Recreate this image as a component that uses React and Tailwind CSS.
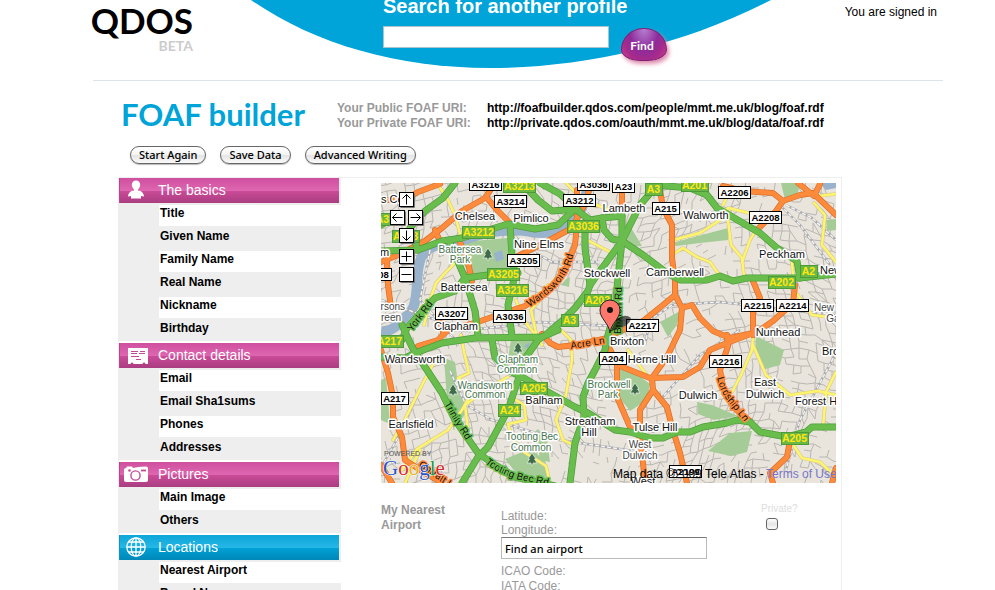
import React from "react";

/* ---------- map data: every coordinate lives in the viewBox below ---------- */

const MAP_BOX = "381 183 455 300";

function buildSideStreets() {
  let seed = 4711;
  const rand = () => {
    seed = (seed * 16807) % 2147483647;
    return seed / 2147483647;
  };
  const cols = 66;
  const rows = 46;
  const step = 8;
  const point = [];
  for (let r = 0; r < rows; r++) {
    point.push([]);
    for (let c = 0; c < cols; c++) {
      const gx = 355 + c * step;
      const gy = 155 + r * step;
      point[r].push([
        Math.round(gx + 14 * Math.sin(gy / 41 + gx / 160) + (rand() - 0.5) * 3),
        Math.round(gy + 15 * Math.sin(gx / 47 + 1) + (rand() - 0.5) * 3),
      ]);
    }
  }
  let d = "";
  for (let r = 0; r < rows - 1; r++) {
    for (let c = 0; c < cols - 1; c++) {
      const density = 0.5 + 0.22 * Math.sin(c / 5 + r / 7);
      const [x, y] = point[r][c];
      const seg = (p) => {
        d += `M${x} ${y}L${p[0]} ${p[1]}`;
      };
      if (rand() < density) seg(point[r][c + 1]);
      if (rand() < density) seg(point[r + 1][c]);
      if (rand() < 0.06) seg(point[r + 1][c + 1]);
    }
  }
  return d;
}

const SIDE_STREETS = buildSideStreets();

const PARKS = [
  "M450 243L508 238L513 262L507 270L472 277L462 262Z",
  "M444 358L455 362L459 390L468 404L463 418L448 412Z",
  "M511 340L536 339L531 352L521 366L508 358Z",
  "M617 368L634 372L650 384L647 400L630 411L620 398Z",
  "M672 243L728 228L728 240L700 243L676 246Z",
  "M756 336L784 350L780 365L762 370L755 352Z",
  "M697 402L712 405L738 416L714 420L698 414Z",
  "M708 451L730 433L752 431L747 452L731 456Z",
  "M505 459L530 449L545 460L550 483L520 478Z",
  "M660 322L682 310L676 326L668 337Z",
  "M781 183L800 183L797 197L785 200Z",
  "M826 220L836 219L836 230L827 231Z",
  "M630 226L636 236L642 246L632 247L626 240Z",
  "M381 380L386 378L390 424L381 420Z",
  "M536 430L546 432L550 462L540 460Z",
  "M480 183L495 183L490 189Z",
  "M566 279L570 277L569 287L561 285Z",
];

const YELLOW = [
  "M437 183L448 200L455 215L461 238",
  "M424 325L430 300L436 283L446 272L456 262",
  "M516 300L522 318L534 333L542 345",
  "M561 330L571 340L572 360L566 395L556 420L563 440L576 446",
  "M461 335L464 352L469 373L458 378L474 390",
  "M433 364L424 381L402 425L393 440",
  "M476 385L462 410L448 430L417 449L402 470",
  "M508 377L488 388L465 405L468 430",
  "M516 400L524 405L526 420L508 424L512 438L524 452L546 466L550 483",
  "M673 240L700 233L720 220L728 208L745 212L760 216",
  "M727 212L731 245L742 258L744 276",
  "M742 262L750 240L757 228",
  "M673 254L683 248L697 257L710 262L720 276",
  "M723 205L729 193",
  "M814 203L825 215L822 245L836 262",
  "M818 196L836 194",
  "M792 262L794 290L812 315L836 318",
  "M753 337L752 350L741 375L732 392",
  "M753 345L766 375L790 395L818 391L836 395",
  "M836 372L826 392L823 427",
  "M790 440L802 458L820 462L836 477",
  "M628 350L646 374",
  "M587 240L614 254",
  "M566 183L583 200L610 210",
  "M410 470L420 450L405 483",
  "M548 285L540 300L531 310L536 333",
];

const ORANGE = [
  "M577 190L577 225L575 245L565 271L548 291L525 306L495 316L475 323L448 330L438 340L418 346",
  "M590 183L587 200L572 228L548 241L518 256",
  "M381 262L398 255L425 241L442 228L462 211L485 198L495 183",
  "M487 198L498 211L510 223",
  "M381 200L405 200L418 192L440 184",
  "M435 230L442 246",
  "M458 238L467 258L472 281",
  "M387 262L388 285L391 308",
  "M438 311L443 332",
  "M622 183L622 220",
  "M660 190L663 208L672 225L672 258L675 281L675 295L663 305L643 321L610 336",
  "M675 295L682 308L680 330L667 357L652 378",
  "M682 308L692 305L700 318L713 331L730 338L753 333L727 343L710 350L700 367L683 377L650 378L620 366",
  "M727 335L728 346L720 370L723 387L733 407L750 421",
  "M723 186L743 191L773 193L783 201L800 195L813 193L836 215",
  "M783 201L776 211L757 230",
  "M798 183L814 196L820 184",
  "M753 281L760 298L753 311L753 335",
  "M795 285L793 303L773 321L753 335",
  "M605 340L617 363L617 397L630 427L640 437L643 463L645 483",
  "M652 378L653 390L640 410L640 437",
  "M653 390L667 407L672 427L680 453L687 483",
  "M790 440L787 457L770 473L773 483",
  "M381 350L388 373L393 397L393 417L402 437L405 460L425 473L442 483",
  "M542 334L550 343L558 347L575 345L608 338",
  "M381 465L392 483",
  "M836 468L832 483",
];

const GREEN = [
  "M381 251L418 250L442 241L462 238L485 231L508 224L535 229L558 225L575 209L590 220L602 218L622 216",
  "M522 183L538 200L552 211L577 209",
  "M540 183L560 194L580 212",
  "M455 183L443 198L425 211L410 228L418 250",
  "M465 278L488 275L518 273",
  "M510 225L512 255L515 275L508 305L512 336",
  "M450 243L465 278L475 311L478 336",
  "M465 278L455 291L435 298L425 308L407 328L402 340",
  "M660 183L653 190L640 205L622 241L600 271L590 285L588 291L575 308L562 321L548 333L538 340L522 363L518 380L508 410L488 447L478 457L462 483",
  "M585 222L585 248L590 285",
  "M602 218L604 230L612 239L622 241L643 255L667 273L680 280L707 280L720 276L733 281L747 278L800 278L836 274",
  "M622 216L622 241L618 278L615 311L608 335L605 350L595 370L588 383L583 397L584 417L575 443L570 483",
  "M655 185L690 188L707 195L717 208L760 233L777 248L797 261L800 278",
  "M381 357L405 358L418 352L442 343L475 338L542 337L558 330",
  "M402 325L412 347L425 367L442 393L455 420L478 453L492 463L515 477L555 486",
  "M492 340L495 357L508 370L522 377L548 392L575 407L588 413L615 430L630 432L650 438L663 438L677 432L690 432L703 427L727 423L737 420L750 422L760 432L787 437L806 432L812 427L836 427",
  "M381 225L390 220",
];

const RAIL = [
  "M381 300L430 318L470 330L540 322L610 326",
  "M430 250L420 300L460 345",
  "M450 371L466 405L492 420L560 440L640 452",
  "M510 232L530 250L552 262L600 262",
  "M645 345L650 320L672 305L720 302L836 315",
  "M660 400L700 355L740 330",
  "M780 205L800 225L830 265",
  "M786 205L812 218L836 240",
  "M836 353L800 420L786 470",
  "M425 378L402 430L381 468",
];

const PLACES = [
  [475, 216, "Chelsea"], [531, 218, "Pimlico"], [624, 208, "Lambeth"], [706, 215, "Walworth"],
  [539, 244, "Nine Elms"], [607, 273, "Stockwell"], [675, 272, "Camberwell"], [782, 254, "Peckham"],
  [464, 287, "Battersea"], [456, 326, "Clapham"], [627, 341, "Brixton"], [778, 332, "Nunhead"],
  [415, 359, "Wandsworth"], [652, 359, "Herne Hill"], [544, 400, "Balham"], [698, 395, "Dulwich"],
  [765, 382, "East"], [765, 394, "Dulwich"], [590, 421, "Streatham"], [589, 432, "Hill"],
  [411, 424, "Earlsfield"], [655, 427, "Tulse Hill"], [643, 481, "West"],
];

const CUT_PLACES = [
  [381, 199, "s Co"], [380, 252, "m"], [820, 270, "New"], [822, 351, "Bro"], [795, 401, "Forest Hill"],
];

const SMALL_PLACES = [
  [640, 444, "West"], [640, 455, "Dulwich"], [390, 306, "arsons"], [391, 317, "reen"],
  [824, 307, "New"], [833, 318, "Ga"],
];

const PARK_NAMES = [
  [460, 249, "Battersea"], [460, 259, "Park"], [518, 359, "Clapham"], [517, 369, "Common"],
  [485, 385, "Wandsworth"], [485, 394, "Common"], [532, 436, "Tooting Bec"], [531, 447, "Common"],
  [609, 384, "Brockwell"], [608, 394, "Park"],
];

const TREES = [[488, 254], [518, 348], [453, 390], [532, 459], [635, 389]];

const WHITE_SHIELDS = [
  [485, 184, "A3216"], [593, 184, "A3036"], [623, 186, "A23"], [510, 201, "A3214"], [579, 200, "A3212"],
  [665, 208, "A215"], [734, 192, "A2206"], [765, 217, "A2208"], [523, 260, "A3205"], [377, 274, "A308"],
  [451, 313, "A3207"], [509, 316, "A3036"], [642, 325, "A2217"], [757, 305, "A2215"], [792, 305, "A2214"],
  [612, 358, "A204"], [725, 361, "A2216"], [394, 398, "A217"], [685, 471, "A2199"],
];

const GREEN_SHIELDS = [
  [519, 186, "A3213"], [653, 189, "A3"], [694, 185, "A201"], [478, 232, "A3212"], [583, 226, "A3036"],
  [503, 274, "A3205"], [512, 290, "A3216"], [597, 300, "A203"], [569, 320, "A3"], [781, 282, "A202"],
  [808, 271, "A2"], [533, 388, "A205"], [509, 410, "A24"], [794, 438, "A205"], [389, 341, "A217"],
  [382, 219, "A3"], [405, 236, "A308"],
];

function Roads({ lines, edge, fill, wide, thin }) {
  return (
    <g fill="none" strokeLinejoin="round" strokeLinecap="round">
      {lines.map((d) => <path key={d} d={d} stroke={edge} strokeWidth={wide} />)}
      {lines.map((d) => <path key={d} d={d} stroke={fill} strokeWidth={thin} />)}
    </g>
  );
}

function Shield({ x, y, name, green }) {
  const w = name.length * 5 + 7;
  return (
    <g>
      <rect
        x={Math.round(x - w / 2) + 0.5} y={y - 5.5} width={w} height={12}
        fill={green ? "#6bb845" : "#fff"} stroke={green ? "#4d9a38" : "#000"} strokeWidth="1"
      />
      <text x={x + 0.5} y={y + 4} textAnchor="middle" fontSize={green ? 10.5 : 9.5} fontWeight="700" fill={green ? "#ffe713" : "#000"}>
        {name}
      </text>
    </g>
  );
}

function Halo({ items, size, color, anchor }) {
  return (
    <g fontSize={size} fill={color} textAnchor={anchor} stroke="#fff" strokeWidth="3" strokeLinejoin="round" paintOrder="stroke">
      {items.map(([x, y, name]) => <text key={`${x}-${y}`} x={x} y={y + 4}>{name}</text>)}
    </g>
  );
}

function RoadName({ path, id, halo, children }) {
  return (
    <>
      <path id={id} d={path} fill="none" />
      <text fontSize="10" fill="#111" stroke={halo} strokeWidth="3" strokeLinejoin="round" paintOrder="stroke">
        <textPath href={`#${id}`}>{children}</textPath>
      </text>
    </>
  );
}

const CONTROLS = [
  ["Pan up", 406.5, 199.5, "M0 5V-5M-4 -1L0 -5L4 -1"],
  ["Pan left", 397.5, 217.5, "M5 0H-5M-1 -4L-5 0L-1 4"],
  ["Pan right", 415.5, 217.5, "M-5 0H5M1 -4L5 0L1 4"],
  ["Pan down", 406.5, 235.5, "M0 -5V5M-4 1L0 5L4 1"],
  ["Zoom in", 406.5, 256.5, "M-5 0H5M0 -5V5"],
  ["Zoom out", 406.5, 274.5, "M-5 0H5"],
];

function StreetMap() {
  return (
    <svg viewBox={MAP_BOX} className="block w-full overflow-hidden" fontFamily="Liberation Sans, Arial, sans-serif" role="img" aria-label="Map of Brixton, London">
      <rect x="381" y="183" width="455" height="300" fill="#e9e5dc" />
      <path d={SIDE_STREETS} stroke="#bab7b3" strokeWidth="1" fill="none" />
      {PARKS.map((d) => <path key={d} d={d} fill="#a5cc96" />)}
      <path d="M381 331C394 333 402 320 411 311C420 300 414 276 421 258C428 244 448 242 466 239C486 232 508 228 532 232C556 236 572 226 582 208L589 183" stroke="#99b3cc" strokeWidth="10" fill="none" />
      <path d="M820 183H836V188L826 190Z M494 253L502 250L504 259L496 262Z M524 346L530 342L528 349Z" fill="#99b3cc" />
      <g fill="none">
        {RAIL.map((d) => <path key={d} d={d} stroke="#a9a9ad" strokeWidth="2.4" />)}
        {RAIL.map((d) => <path key={d} d={d} stroke="#f4f4f4" strokeWidth="1.4" strokeDasharray="4 2" />)}
      </g>
      <Roads lines={YELLOW} edge="#d6c98c" fill="#fff56d" wide={3.6} thin={2.4} />
      <Roads lines={ORANGE} edge="#d9702a" fill="#fe8a3c" wide={6} thin={4.6} />
      <Roads lines={GREEN} edge="#4e9e3a" fill="#69bd4d" wide={7} thin={5.6} />

      {TREES.map(([x, y]) => (
        <path key={x} transform={`translate(${x} ${y})`} d="M0 -6L4 0L2.500 0L5 4H1V6H-1V4H-5L-2.500 0L-4 0Z" fill="#3f6b4c" stroke="#dfeeda" strokeWidth="0.800" />
      ))}
      <RoadName id="york" path="M412 332L433 304" halo="#69bd4d">York Rd</RoadName>
      <RoadName id="wandsworth" path="M529 307Q548 296 560 282Q570 270 573 256" halo="#fe8a3c">Wandsworth Rd</RoadName>
      <RoadName id="trinity" path="M444 404L456 424L466 440" halo="#69bd4d">Trinity Rd</RoadName>
      <RoadName id="tooting" path="M485 463Q500 475 520 480L560 488" halo="#69bd4d">Tooting Bec Rd</RoadName>
      <RoadName id="acre" path="M571 349L608 343" halo="#fe8a3c">Acre Ln</RoadName>
      <RoadName id="brixton" path="M621 334L622 280" halo="#69bd4d">Brixton Rd</RoadName>
      <RoadName id="lordship" path="M717 378Q722 396 731 405L746 424" halo="#fe8a3c">Lordship Ln</RoadName>
      <RoadName id="garratt" path="M418 466L450 488" halo="#fe8a3c">Garratt Ln</RoadName>

      {GREEN_SHIELDS.map(([x, y, name]) => <Shield key={`${x}-${y}`} x={x} y={y} name={name} green />)}
      <Halo items={PARK_NAMES} size={10} color="#47744e" anchor="middle" />
      <Halo items={SMALL_PLACES} size={10} color="#444" anchor="middle" />
      <Halo items={PLACES} size={11} color="#111" anchor="middle" />
      <Halo items={CUT_PLACES} size={11} color="#111" anchor="start" />
      {WHITE_SHIELDS.map(([x, y, name]) => <Shield key={`${x}-${y}`} x={x} y={y} name={name} />)}

      <path d="M610 332L617 319Q625 313 631 318Q630 326 618 328Z" fill="#000" opacity="0.600" />
      <path d="M610 333C609 323 600 319 600 310A10 10 0 0 1 620 310C620 319 611 323 610 333Z" fill="#ff776b" stroke="#222" strokeWidth="1" />
      <circle cx="610" cy="310" r="3" fill="#111" />

      {CONTROLS.map(([name, x, y, d]) => (
        <g key={name} transform={`translate(${x} ${y})`} role="button" aria-label={name}>
          <rect x="-7" y="-7" width="14" height="14" fill="#fff" stroke="#000" strokeWidth="1" />
          <path d="M-6 8H8V-6" stroke="#777" fill="none" />
          <path d={d} stroke="#000" strokeWidth="1" fill="none" />
        </g>
      ))}

      <text x="384" y="456" fontSize="7" fill="#555">POWERED BY</text>
      <text x="383" y="475" fontSize="21" fontFamily="Liberation Serif, Times New Roman, serif" stroke="#fff" strokeWidth="1" paintOrder="stroke">
        <tspan fill="#2a56c6">G</tspan><tspan fill="#d62b2b">o</tspan><tspan fill="#e8b21c">o</tspan><tspan fill="#2a56c6">g</tspan><tspan fill="#27963c">l</tspan><tspan fill="#d62b2b">e</tspan>
      </text>
      <text x="613" y="478" fontSize="12" fill="#000">Map data ©2009 Tele Atlas - </text>
      <a href="#terms"><text x="766" y="478" fontSize="12" fill="#7777cc">Terms of Use</text></a>
    </svg>
  );
}

/* ---------- sidebar ---------- */

const PersonIcon = () => (
  <svg viewBox="0 0 24 20" className="h-5 w-6" fill="#fff" aria-hidden="true">
    <path d="M12 0.500C14.500 0.500 16.200 2.500 16.200 4.800C16.200 7 15 8.500 14 9.500V10.500C17.500 11 19.500 12.500 20 16.500L17 16V18.500H7V16L4 16.500C4.500 12.500 6.500 11 10 10.500V9.500C9 8.500 7.800 7 7.800 4.800C7.800 2.500 9.500 0.500 12 0.500Z" />
  </svg>
);

const CardIcon = () => (
  <svg viewBox="0 0 24 20" className="h-5 w-6" aria-hidden="true">
    <path d="M4 3H24V19H21.500C21 17 19 17 18.500 19H9.500C9 17 7 17 6.500 19H4Z" fill="#fff" />
    <path d="M7 6.500H14M7 8.500H13M16 6.500H21M15 8.500H21M7 11.500H15M12 14.500H17" stroke="#c54a95" fill="none" />
  </svg>
);

const CameraIcon = () => (
  <svg viewBox="0 0 24 20" className="h-5 w-6" aria-hidden="true">
    <path d="M2 4L3 2.500H8L9 4L14 3L22 2.500Q24 2.500 24 4.500V16Q24 18 22 18H2Q0 18 0 16V6Q0 4 2 4Z" fill="#fff" />
    <circle cx="11.500" cy="11.500" r="4.600" fill="#fff" stroke="#c54a95" strokeWidth="1.400" />
    <circle cx="5.500" cy="6.500" r="1.300" fill="#c54a95" />
    <path d="M17 6.500H22" stroke="#c54a95" strokeWidth="1.800" />
  </svg>
);

const GlobeIcon = () => (
  <svg viewBox="0 0 24 20" className="h-5 w-6" fill="none" stroke="#fff" strokeWidth="1.300" aria-hidden="true">
    <circle cx="12" cy="10" r="9.200" />
    <ellipse cx="12" cy="10" rx="4.800" ry="9.200" />
    <path d="M12 1V19M3 10H21M4.500 5H19.500M4.500 15H19.500" />
  </svg>
);

const PINK = "bg-[linear-gradient(#cf4f9f_0%,#de66b0_50%,#cb4b98_52%,#a93d80_100%)] border-[#b94489]";
const BLUE = "bg-[linear-gradient(#0ea5d8_0%,#25b7e6_50%,#00a1d6_52%,#0087b8_100%)] border-[#1193c0]";

const SECTIONS = [
  { title: "The basics", icon: PersonIcon, tone: PINK, items: ["Title", "Given Name", "Family Name", "Real Name", "Nickname", "Birthday"] },
  { title: "Contact details", icon: CardIcon, tone: PINK, items: ["Email", "Email Sha1sums", "Phones", "Addresses"] },
  { title: "Pictures", icon: CameraIcon, tone: PINK, items: ["Main Image", "Others"] },
  { title: "Locations", icon: GlobeIcon, tone: BLUE, items: ["Nearest Airport", "Based Near"] },
];

function Section({ title, icon: Icon, tone, items }) {
  return (
    <section className="mb-0.5 bg-[#eee]">
      <button type="button" className={`flex h-[25px] w-[220px] items-center gap-2.5 border-l pb-0.5 pl-1 text-left text-sm text-white ${tone}`}>
        <Icon />
        {title}
      </button>
      <ul>
        {items.map((name, i) => (
          <li key={name} className="h-[23px] pt-0.5 pl-10">
            <a href={`#${name}`} className={`block h-[21px] pl-px text-xs leading-4 font-bold text-black ${i % 2 ? "" : "bg-white"}`}>{name}</a>
          </li>
        ))}
      </ul>
    </section>
  );
}

/* ---------- page ---------- */

const AQUA = "h-[18px] rounded-full border border-[#666] bg-[linear-gradient(#fff_0%,#f4f4f4_48%,#e4e4e4_52%,#fafafa_100%)] px-2 font-['Noto_Sans',sans-serif] text-[11px] leading-4 font-medium text-black shadow-[0_1px_1px_#bbb]";

export default function App() {
  return (
    <div className="relative isolate h-screen overflow-hidden bg-white font-['Liberation_Sans',Arial,sans-serif] text-xs text-black">
      <svg viewBox="251 0 520 69" className="absolute top-0 left-[251px] -z-10 h-[69px] w-[520px]" aria-hidden="true">
        <path d="M251 0C313 43 395 68 490 68C580 68 680 47 771 0Z" fill="#00a4d9" />
      </svg>

      <div className="ml-[93px] max-w-[850px]">
        <header className="flex h-[81px] items-start border-b border-[#dde3e9]">
          <div className="w-[289px] shrink-0">
            <div className="flex w-[100px] flex-col items-end font-['Lato',sans-serif] font-bold">
              <span className="text-[35px] leading-10">QDOS</span>
              <span className="text-sm leading-3 text-[#ccc]">BETA</span>
            </div>
          </div>
          <form className="flex-1" onSubmit={(e) => e.preventDefault()}>
            <label htmlFor="q" className="block h-[26px] pl-px text-xl leading-3 font-bold text-white">Search for another profile</label>
            <div className="flex gap-3">
              <input id="q" className="ml-px h-[22px] w-[226px] border border-[#a9c4cf] bg-white px-1" />
              <button type="button" className="mt-0.5 h-[33px] w-[46px] rounded-[48%_48%_42%_42%/66%_66%_34%_34%] border border-[#7d2173] bg-[radial-gradient(ellipse_at_50%_0%,#b77fd0_0%,#8d2b9b_48%,#a72a8b_72%,#d23d90_100%)] pt-0.5 pr-1 font-['Lato',sans-serif] text-xs font-bold text-white shadow-[2px_3px_4px_#e08cae]">Find</button>
            </div>
          </form>
          <p className="pt-1 pr-1.5 leading-4">You are signed in</p>
        </header>

        <main className="ml-[25px]">
          <div className="flex items-start pt-[15px] pl-[3px]">
            <h1 className="w-[216px] shrink-0 font-['Lato',sans-serif] text-[31px] leading-9 font-bold text-[#00a4d9]">FOAF builder</h1>
            <dl className="grid grid-cols-[150px_1fr] pt-[5px] leading-[15px] font-bold">
              <dt className="text-[#999]">Your Public FOAF URI:</dt>
              <dd>http://foafbuilder.qdos.com/people/mmt.me.uk/blog/foaf.rdf</dd>
              <dt className="text-[#999]">Your Private FOAF URI:</dt>
              <dd>http://private.qdos.com/oauth/mmt.me.uk/blog/data/foaf.rdf</dd>
            </dl>
          </div>

          <div className="flex gap-3.5 pt-3.5 pb-[13px] pl-3">
            <button type="button" className={AQUA}>Start Again</button>
            <button type="button" className={AQUA}>Save Data</button>
            <button type="button" className={AQUA}>Advanced Writing</button>
          </div>

          <div className="flex max-w-[724px] items-start border border-[#eee]">
            <nav className="w-[222px] shrink-0">
              {SECTIONS.map((s) => <Section key={s.title} {...s} />)}
            </nav>
            <div className="flex-1 pt-[5px] pr-[5px] pl-10">
              <StreetMap />
              <div className="grid grid-cols-[120px_260px_1fr] pt-5 text-[#999]">
                <h2 className="w-20 leading-[15px] font-bold">My Nearest Airport</h2>
                <div className="pt-1.5">
                  <p className="leading-[14px]">Latitude:</p>
                  <p className="leading-[14px]">Longitude:</p>
                  <input aria-label="Find an airport" defaultValue="Find an airport" className="mb-[5px] block h-[22px] w-[206px] border border-[#bbb] border-t-[#777] bg-white px-[3px] font-['Noto_Sans',sans-serif] text-[11px] font-medium text-black" />
                  <p className="leading-[15px]">ICAO Code:</p>
                  <p className="leading-[15px]">IATA Code:</p>
                </div>
                <div>
                  <label htmlFor="private" className="block text-[10px] leading-[11px] text-[#ddd]">Private?</label>
                  <input id="private" type="checkbox" className="mt-1 ml-[5px] block size-3 appearance-none rounded-[3px] border border-[#666] bg-[linear-gradient(#fff,#e4e4e4_50%,#fafafa)]" />
                </div>
              </div>
            </div>
          </div>
        </main>
      </div>
    </div>
  );
}
